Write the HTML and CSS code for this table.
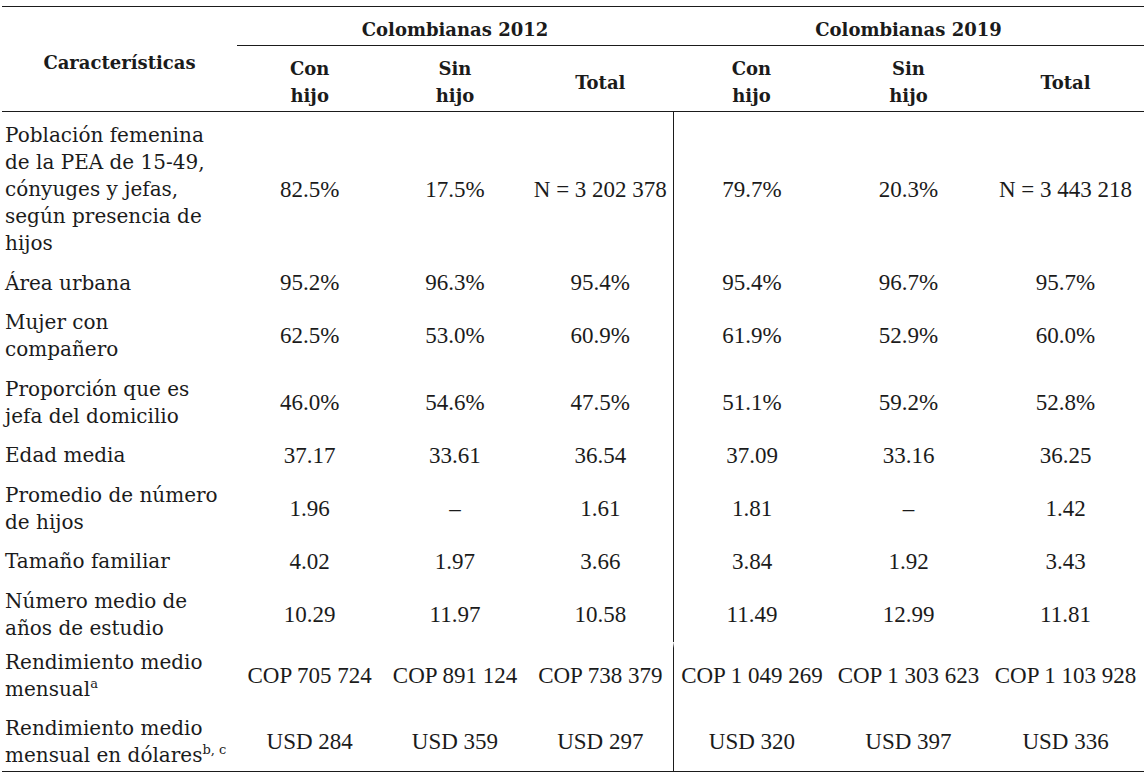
FILE: index.html
```html
<!DOCTYPE html>
<html lang="es">
<head>
<meta charset="utf-8">
<title>Características</title>
<link rel="stylesheet" href="styles.css">
</head>
<body>
<table class="tabla">
  <colgroup>
    <col class="c-label">
    <col class="c-12"><col class="c-12"><col class="c-12">
    <col class="c-19"><col class="c-19"><col class="c-19">
  </colgroup>
  <thead>
    <tr class="h-group">
      <th rowspan="2" class="h-label">Características</th>
      <th colspan="3" class="h-span">Colombianas 2012</th>
      <th colspan="3" class="h-span">Colombianas 2019</th>
    </tr>
    <tr class="h-sub">
      <th>Con<br>hijo</th>
      <th>Sin<br>hijo</th>
      <th>Total</th>
      <th>Con<br>hijo</th>
      <th>Sin<br>hijo</th>
      <th>Total</th>
    </tr>
  </thead>
  <tbody>
    <tr class="r-first">
      <td class="lbl">Población femenina<br>de la PEA de 15-49,<br>cónyuges y jefas,<br>según presencia de<br>hijos</td>
      <td>82.5%</td><td>17.5%</td><td>N = 3 202 378</td>
      <td class="sep">79.7%</td><td>20.3%</td><td>N = 3 443 218</td>
    </tr>
    <tr>
      <td class="lbl">Área urbana</td>
      <td>95.2%</td><td>96.3%</td><td>95.4%</td>
      <td class="sep">95.4%</td><td>96.7%</td><td>95.7%</td>
    </tr>
    <tr>
      <td class="lbl">Mujer con<br>compañero</td>
      <td>62.5%</td><td>53.0%</td><td>60.9%</td>
      <td class="sep">61.9%</td><td>52.9%</td><td>60.0%</td>
    </tr>
    <tr>
      <td class="lbl">Proporción que es<br>jefa del domicilio</td>
      <td>46.0%</td><td>54.6%</td><td>47.5%</td>
      <td class="sep">51.1%</td><td>59.2%</td><td>52.8%</td>
    </tr>
    <tr>
      <td class="lbl">Edad media</td>
      <td>37.17</td><td>33.61</td><td>36.54</td>
      <td class="sep">37.09</td><td>33.16</td><td>36.25</td>
    </tr>
    <tr>
      <td class="lbl">Promedio de número<br>de hijos</td>
      <td>1.96</td><td>–</td><td>1.61</td>
      <td class="sep">1.81</td><td>–</td><td>1.42</td>
    </tr>
    <tr>
      <td class="lbl">Tamaño familiar</td>
      <td>4.02</td><td>1.97</td><td>3.66</td>
      <td class="sep">3.84</td><td>1.92</td><td>3.43</td>
    </tr>
    <tr class="r-break-before">
      <td class="lbl">Número medio de<br>años de estudio</td>
      <td>10.29</td><td>11.97</td><td>10.58</td>
      <td class="sep">11.49</td><td>12.99</td><td>11.81</td>
    </tr>
    <tr class="r-break-after">
      <td class="lbl">Rendimiento medio<br>mensual<sup>a</sup></td>
      <td>COP 705 724</td><td>COP 891 124</td><td>COP 738 379</td>
      <td class="sep">COP 1 049 269</td><td>COP 1 303 623</td><td>COP 1 103 928</td>
    </tr>
    <tr class="r-last">
      <td class="lbl">Rendimiento medio<br>mensual en dólares<sup>b, c</sup></td>
      <td>USD 284</td><td>USD 359</td><td>USD 297</td>
      <td class="sep">USD 320</td><td>USD 397</td><td>USD 336</td>
    </tr>
  </tbody>
</table>
</body>
</html>
```

FILE: styles.css
```css
html, body {
  margin: 0;
  padding: 0;
  background: #ffffff;
}

body {
  font-family: "DejaVu Serif", "Liberation Serif", serif;
  color: #1b1b1b;
}

.tabla {
  margin: 6px 0 0 2px;
  width: 1142px;
  table-layout: fixed;
  border-collapse: separate;
  border-spacing: 0;
  border-top: 1px solid #1b1b1b;
}

.c-label { width: 235px; }
.c-12 { width: 145.33px; }
.c-19 { width: 157px; }

th {
  font-weight: bold;
  font-size: 18px;
  line-height: 27px;
  text-align: center;
  vertical-align: middle;
  padding: 9px 2px 2px;
}

.h-span {
  border-bottom: 1px solid #1b1b1b;
}

.h-label,
.h-sub th {
  border-bottom: 1px solid #1b1b1b;
}

td {
  font-family: "Liberation Serif", "Times New Roman", serif;
  font-size: 23px;
  line-height: 27px;
  text-align: center;
  vertical-align: middle;
  padding: 6px 0 6.5px;
  white-space: nowrap;
}

td.lbl {
  font-family: "DejaVu Serif", "Liberation Serif", serif;
  font-size: 20px;
  text-align: left;
  padding: 6.5px 0 6px 3px;
}

td.sep {
  border-left: 1px solid #1b1b1b;
}

.r-first td {
  padding-top: 10px;
}

.r-break-before td {
  padding-bottom: 0;
}

.r-break-after td {
  border-top: 6px solid transparent;
  padding-top: 1px;
}

.r-last td {
  padding-bottom: 2px;
  border-bottom: 1px solid #1b1b1b;
}

sup {
  font-size: 13px;
  line-height: 0;
  vertical-align: 8px;
}
```
